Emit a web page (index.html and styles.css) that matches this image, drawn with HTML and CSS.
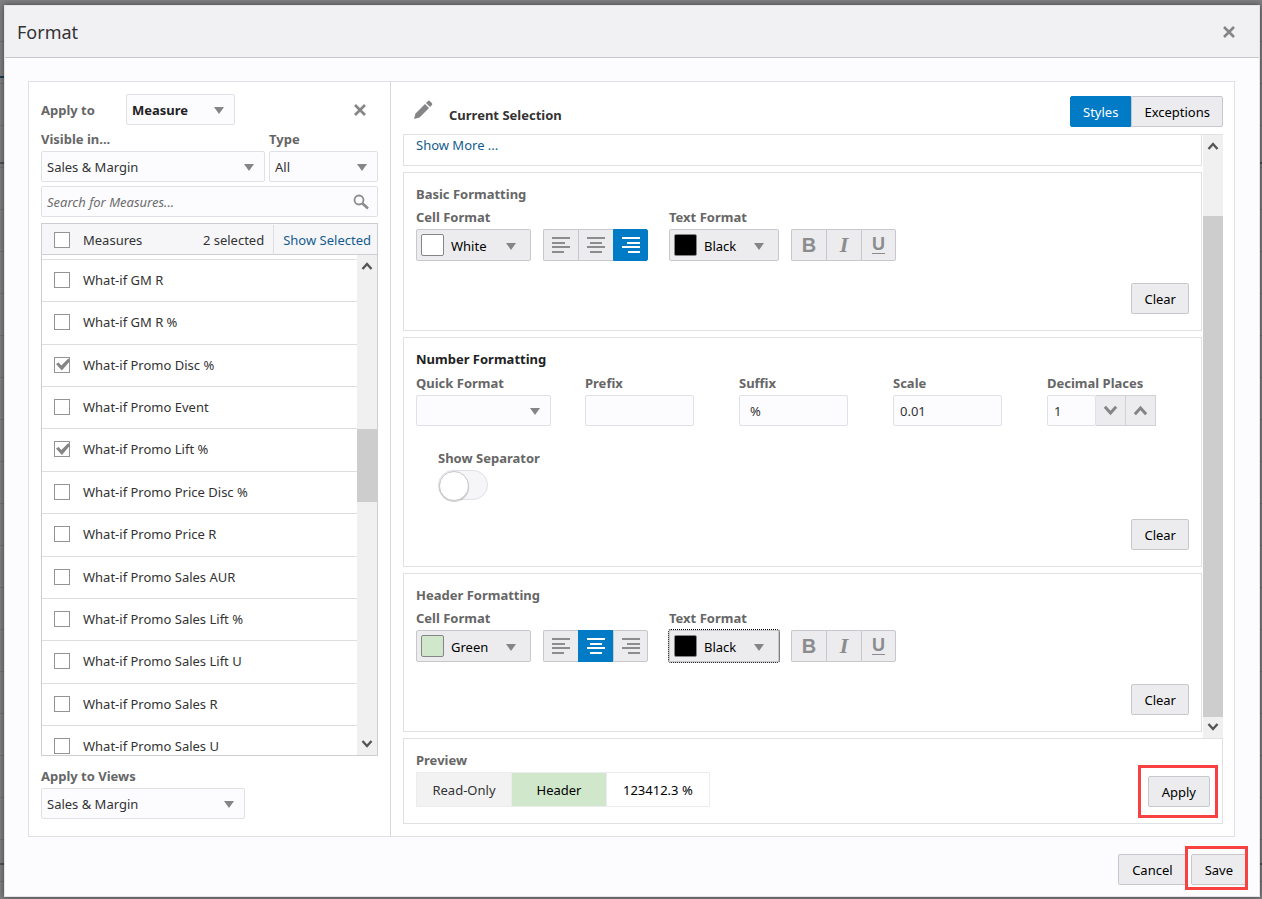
FILE: index.html
```html
<!DOCTYPE html>
<html lang="en">

<head>
  <meta charset="UTF-8" />
  <meta name="viewport" content="width=device-width, initial-scale=1.0" />
  <title>Format</title>
  <link rel="stylesheet" href="styles.css">
</head>

<body>
  <!-- icons -->
  <svg class="defs" aria-hidden="true">
    <symbol id="align-left" viewBox="0 0 18 16">
      <path d="M0 0h18v2H0zM0 5h13v2H0zM0 9h18v2H0zM0 14h12v2H0z" />
    </symbol>
    <symbol id="align-center" viewBox="0 0 18 16">
      <path d="M0 0h18v2H0zM3 5h12v2H3zM0 9h18v2H0zM3 14h12v2H3z" />
    </symbol>
    <symbol id="align-right" viewBox="0 0 18 16">
      <path d="M0 0h18v2H0zM5 5h13v2H5zM0 9h18v2H0zM6 14h12v2H6z" />
    </symbol>
    <symbol id="close" viewBox="0 0 12 12">
      <path d="M1 1l10 10M11 1L1 11" fill="none" stroke="currentColor" stroke-width="2.6" />
    </symbol>
    <symbol id="up" viewBox="0 0 12 10">
      <path d="M1.5 8L6 3l4.5 5" fill="none" stroke="currentColor" stroke-width="2.4" />
    </symbol>
    <symbol id="down" viewBox="0 0 12 10">
      <path d="M1.5 2L6 7l4.5-5" fill="none" stroke="currentColor" stroke-width="2.4" />
    </symbol>
  </svg>

  <!-- page behind the dialog -->
  <div class="backdrop" aria-hidden="true">
    <span class="blue-line"></span>
    <span class="dark-line"></span>
    <span class="dark-line bottom"></span>
  </div>

  <div class="dialog" role="dialog" aria-labelledby="dialogTitle">
    <header class="dialog-header">
      <h1 id="dialogTitle">Format</h1>
      <button class="icon-btn" type="button" aria-label="Close"><svg width="12" height="12"><use href="#close" /></svg></button>
    </header>

    <main class="content">
      <aside class="left">
        <div class="apply-row">
          <label for="applyTo">Apply to</label>
          <div class="select-box strong">
            <select id="applyTo">
              <option>Measure</option>
            </select>
          </div>
          <button class="icon-btn" type="button" aria-label="Close panel"><svg width="12" height="12"><use href="#close" /></svg></button>
        </div>

        <div class="filter-row">
          <div class="field visible-in">
            <label for="visibleIn">Visible in...</label>
            <div class="select-box">
              <select id="visibleIn">
                <option>Sales &amp; Margin</option>
              </select>
            </div>
          </div>
          <div class="field type">
            <label for="type">Type</label>
            <div class="select-box">
              <select id="type">
                <option>All</option>
              </select>
            </div>
          </div>
        </div>

        <div class="search">
          <input type="text" aria-label="Search for Measures" placeholder="Search for Measures..." />
          <svg width="16" height="16" viewBox="0 0 16 16" fill="none" stroke="#8c8c8e">
            <circle cx="6" cy="6" r="4.5" stroke-width="1.8" />
            <path d="M9.5 9.5l5.5 5" stroke-width="2.6" />
          </svg>
        </div>

        <div class="measures">
          <div class="measures-head">
            <label class="check"><input type="checkbox" /> Measures</label>
            <span class="count">2 selected</span>
            <a href="#">Show Selected</a>
          </div>
          <div class="measures-body">
            <ul>
              <li><label class="check"><input type="checkbox" /> What-if GM R</label></li>
              <li><label class="check"><input type="checkbox" /> What-if GM R %</label></li>
              <li><label class="check"><input type="checkbox" checked /> What-if Promo Disc %</label></li>
              <li><label class="check"><input type="checkbox" /> What-if Promo Event</label></li>
              <li><label class="check"><input type="checkbox" checked /> What-if Promo Lift %</label></li>
              <li><label class="check"><input type="checkbox" /> What-if Promo Price Disc %</label></li>
              <li><label class="check"><input type="checkbox" /> What-if Promo Price R</label></li>
              <li><label class="check"><input type="checkbox" /> What-if Promo Sales AUR</label></li>
              <li><label class="check"><input type="checkbox" /> What-if Promo Sales Lift %</label></li>
              <li><label class="check"><input type="checkbox" /> What-if Promo Sales Lift U</label></li>
              <li><label class="check"><input type="checkbox" /> What-if Promo Sales R</label></li>
              <li><label class="check"><input type="checkbox" /> What-if Promo Sales U</label></li>
            </ul>
            <div class="scrollbar list-bar">
              <svg width="12" height="10"><use href="#up" /></svg>
              <span class="track"><span class="thumb"></span></span>
              <svg width="12" height="10"><use href="#down" /></svg>
            </div>
          </div>
        </div>

        <div class="field views">
          <label for="applyViews">Apply to Views</label>
          <div class="select-box">
            <select id="applyViews">
              <option>Sales &amp; Margin</option>
            </select>
          </div>
        </div>
      </aside>

      <section class="right">
        <div class="right-header">
          <svg class="pencil" width="20" height="20" viewBox="0 0 20 20" fill="#858587">
            <path d="M1 19l1.5-5.5L12 4l4 4-9.500 9.500zM13 3l1.800-1.800a1.500 1.500 0 0 1 2.200 0l1.800 1.800a1.500 1.500 0 0 1 0 2.200L17 7z" />
          </svg>
          <h2>Current Selection</h2>
          <div class="tabs">
            <button type="button" class="tab active">Styles</button>
            <button type="button" class="tab">Exceptions</button>
          </div>
        </div>

        <div class="scroll-area">
          <div class="sections">
            <div class="card summary"><a href="#">Show More ...</a></div>

            <div class="card">
              <h3>Basic Formatting</h3>
              <div class="format-row">
                <div class="field">
                  <label for="basicCell">Cell Format</label>
                  <div class="color-select">
                    <span class="swatch white"></span>
                    <select id="basicCell">
                      <option>White</option>
                    </select>
                  </div>
                </div>
                <div class="btn-group">
                  <button type="button" aria-label="Align left"><svg width="18" height="16"><use href="#align-left" /></svg></button>
                  <button type="button" aria-label="Align center"><svg width="18" height="16"><use href="#align-center" /></svg></button>
                  <button type="button" class="active" aria-label="Align right"><svg width="18" height="16"><use href="#align-right" /></svg></button>
                </div>
                <div class="field text-format">
                  <label for="basicText">Text Format</label>
                  <div class="color-select">
                    <span class="swatch black"></span>
                    <select id="basicText">
                      <option>Black</option>
                    </select>
                  </div>
                </div>
                <div class="btn-group">
                  <button type="button" class="bold">B</button>
                  <button type="button" class="italic">I</button>
                  <button type="button" class="underline">U</button>
                </div>
              </div>
              <div class="card-actions"><button class="btn" type="button">Clear</button></div>
            </div>

            <div class="card">
              <h3 class="dark">Number Formatting</h3>
              <div class="number-row">
                <div class="field">
                  <label for="quickFormat">Quick Format</label>
                  <div class="select-box">
                    <select id="quickFormat">
                      <option></option>
                    </select>
                  </div>
                </div>
                <div class="field">
                  <label for="prefix">Prefix</label>
                  <input type="text" id="prefix" />
                </div>
                <div class="field">
                  <label for="suffix">Suffix</label>
                  <input type="text" id="suffix" class="suffix" value="%" />
                </div>
                <div class="field">
                  <label for="scale">Scale</label>
                  <input type="text" id="scale" value="0.01" />
                </div>
                <div class="field">
                  <label for="decimals">Decimal Places</label>
                  <div class="spinner">
                    <input type="text" id="decimals" value="1" />
                    <button type="button" aria-label="Decrease"><svg width="15" height="13"><use href="#down" /></svg></button>
                    <button type="button" aria-label="Increase"><svg width="15" height="13"><use href="#up" /></svg></button>
                  </div>
                </div>
              </div>
              <div class="separator">
                <label for="showSeparator">Show Separator</label>
                <input type="checkbox" class="switch" id="showSeparator" />
              </div>
              <div class="card-actions"><button class="btn" type="button">Clear</button></div>
            </div>

            <div class="card">
              <h3>Header Formatting</h3>
              <div class="format-row">
                <div class="field">
                  <label for="headerCell">Cell Format</label>
                  <div class="color-select">
                    <span class="swatch green"></span>
                    <select id="headerCell">
                      <option>Green</option>
                    </select>
                  </div>
                </div>
                <div class="btn-group">
                  <button type="button" aria-label="Align left"><svg width="18" height="16"><use href="#align-left" /></svg></button>
                  <button type="button" class="active" aria-label="Align center"><svg width="18" height="16"><use href="#align-center" /></svg></button>
                  <button type="button" aria-label="Align right"><svg width="18" height="16"><use href="#align-right" /></svg></button>
                </div>
                <div class="field text-format">
                  <label for="headerText">Text Format</label>
                  <div class="color-select focused">
                    <span class="swatch black"></span>
                    <select id="headerText">
                      <option>Black</option>
                    </select>
                  </div>
                </div>
                <div class="btn-group">
                  <button type="button" class="bold">B</button>
                  <button type="button" class="italic">I</button>
                  <button type="button" class="underline">U</button>
                </div>
              </div>
              <div class="card-actions"><button class="btn" type="button">Clear</button></div>
            </div>
          </div>

          <div class="scrollbar main-bar">
            <svg width="12" height="10"><use href="#up" /></svg>
            <span class="track"><span class="thumb"></span></span>
            <svg width="12" height="10"><use href="#down" /></svg>
          </div>
        </div>

        <div class="preview">
          <div>
            <h3>Preview</h3>
            <table>
              <tr>
                <td class="read-only">Read-Only</td>
                <td class="header-cell">Header</td>
                <td class="value">123412.3 %</td>
              </tr>
            </table>
          </div>
          <span class="callout"><button class="btn" type="button">Apply</button></span>
        </div>
      </section>
    </main>

    <footer class="dialog-footer">
      <button class="btn" type="button">Cancel</button>
      <span class="callout save"><button class="btn" type="button">Save</button></span>
    </footer>
  </div>
</body>

</html>
```

FILE: styles.css
```css
* {
  margin: 0;
  padding: 0;
  box-sizing: border-box;
}

body {
  position: relative;
  min-height: 100vh;
  display: flex;
  padding: 5px 2px 2px 4px;
  color: #333;
  font-family: 'Noto Sans', 'Open Sans', sans-serif;
  font-size: 13px;
}

button,
input,
select {
  font: inherit;
  color: inherit;
}

button {
  cursor: pointer;
}

a {
  color: #145c8e;
  text-decoration: none;
}

a:hover {
  text-decoration: underline;
}

.defs {
  position: absolute;
  width: 0;
  height: 0;
}

.backdrop {
  position: absolute;
  inset: 0;
  background: repeating-linear-gradient(#808082 0 41px, #727274 41px 42px);
}

.backdrop span {
  position: absolute;
  left: 0;
  right: 0;
  height: 2px;
}

.backdrop .blue-line {
  top: 76px;
  right: 50%;
  background: #1c3a52;
}

.dark-line {
  top: 162px;
  background: #505054;
}

.dark-line.bottom {
  top: 863px;
}

.dialog {
  position: relative;
  flex: 1;
  display: flex;
  flex-direction: column;
  background: #fcfcff;
  border: 1px solid #e4e4e8;
  box-shadow: 0 0 6px rgba(0, 0, 0, 0.5);
}

.dialog-header {
  display: flex;
  align-items: center;
  justify-content: space-between;
  height: 52px;
  padding: 0 24px 0 12px;
  background: #f1f1f4;
  border-bottom: 1px solid #c8c8cc;
}

.dialog-header h1 {
  font-size: 18px;
  font-weight: 400;
}

.icon-btn {
  display: flex;
  border: none;
  background: none;
  color: #858587;
}

.content {
  display: flex;
  margin: 23px 24px 0 23px;
  background: #fff;
  border: 1px solid #dfe1e4;
}

/* Shared fields */
label,
h3 {
  font-weight: 700;
  color: #666;
}

.field {
  display: flex;
  flex-direction: column;
}

.field label,
.separator label {
  line-height: 24px;
}

.select-box,
.color-select {
  position: relative;
}

.select-box::after,
.color-select::after {
  content: "";
  position: absolute;
  top: 13px;
  right: 11px;
  border: 5px solid transparent;
  border-top: 7px solid #858588;
  border-bottom: none;
  pointer-events: none;
}

select {
  appearance: none;
  display: block;
  width: 100%;
  cursor: pointer;
}

.select-box select,
.field input[type="text"],
.search input {
  width: 100%;
  height: 31px;
  padding: 1px 5px 0;
  background: #fcfcff;
  border: 1px solid #dfe1e6;
  border-radius: 2px;
}

.field input[type="text"] {
  width: 109px;
  padding: 1px 6px 0;
}

.field input.suffix {
  padding-left: 10px;
}

.btn {
  height: 31px;
  padding: 1px 12px 0;
  background: #ececee;
  border: 1px solid #c6c8cc;
  border-radius: 2px;
  color: #000;
}

.btn:hover {
  background: #fff;
}

/* Left panel */
.left {
  width: 361px;
  padding: 12px 12px 17px;
}

.apply-row {
  display: flex;
  align-items: center;
}

.apply-row .select-box {
  width: 109px;
  margin: 0 auto 0 31px;
}

.strong select {
  color: #222;
  font-weight: 700;
}

.apply-row .icon-btn {
  margin-right: 12px;
}

.filter-row {
  display: flex;
  gap: 4px;
  margin-top: 2px;
}

.visible-in {
  flex: 1;
}

.type {
  width: 109px;
}

.search {
  position: relative;
  margin: 4px 0 6px;
}

.search input::placeholder {
  color: #6c6c6e;
  font-style: italic;
}

.search svg {
  position: absolute;
  top: 8px;
  right: 9px;
}

.measures {
  border: 1px solid #ccced2;
}

.measures-head {
  display: flex;
  align-items: center;
  height: 31px;
  padding-top: 1px;
  background: #f6f6f9;
  border-bottom: 1px solid #ccced2;
}

.measures-head a {
  padding: 0 6px 0 9px;
  line-height: 30px;
  border-left: 1px solid #dcdee0;
}

.count {
  margin-left: auto;
  padding-right: 9px;
}

.check {
  display: flex;
  align-items: center;
  gap: 13px;
  padding-left: 12px;
  font-weight: 400;
  color: #333;
}

.check input {
  appearance: none;
  position: relative;
  width: 16px;
  height: 16px;
  background: #fff;
  border: 1px solid #949496;
}

.check input:checked::after {
  content: "";
  position: absolute;
  inset: 0 -1px 1px 1px;
  background: #858587;
  clip-path: polygon(0 50%, 18% 38%, 38% 62%, 88% 8%, 100% 26%, 42% 100%);
}

.measures-body {
  display: flex;
  height: 500px;
  overflow: hidden;
}

.measures-body ul {
  flex: 1;
  display: grid;
  grid-auto-rows: 42px 43px 42px 42px 43px;
  margin-top: 4px;
  list-style: none;
}

.measures-body li {
  display: flex;
  padding-bottom: 2px;
  border-top: 1px solid #dcdee0;
}

/* Scrollbars */
.scrollbar {
  display: flex;
  flex-direction: column;
  align-items: center;
  width: 20px;
  padding: 6px 0;
  background: #f0f0f0;
  color: #555;
}

.track {
  flex: 1;
  width: 100%;
}

.thumb {
  display: block;
  background: #cdcdcd;
}

.list-bar .thumb {
  height: 73px;
  margin-top: 158px;
}

.views {
  width: 204px;
  margin-top: 8px;
}

/* Right panel */
.right {
  flex: 1;
  padding: 0 11px 12px 12px;
  border-left: 1px solid #d6d8dc;
}

.right-header {
  display: flex;
  align-items: center;
  height: 52px;
  padding-top: 7px;
}

.pencil {
  margin: 0 16px 4px 10px;
}

.right-header h2 {
  padding-top: 6px;
  font-size: 13px;
  font-weight: 700;
}

.tabs {
  display: flex;
  margin-left: auto;
}

.tab {
  height: 31px;
  padding: 0 12px;
  background: #ececee;
  border: 1px solid #c6c8cc;
  border-radius: 0 2px 2px 0;
  color: #000;
}

.tab.active {
  background: #027bc7;
  border-color: #027bc7;
  border-radius: 2px 0 0 2px;
  color: #fff;
}

.scroll-area {
  display: flex;
  border-top: 1px solid #dfe1e4;
}

.sections {
  flex: 1;
  display: flex;
  flex-direction: column;
  gap: 6px;
  padding-bottom: 6px;
}

.card {
  padding: 10px 12px 16px;
  border: 1px solid #dfe1e4;
}

.summary {
  padding: 0 12px 9px;
  line-height: 21px;
  border-top: none;
}

h3 {
  font-size: 13px;
  line-height: 22px;
}

h3.dark {
  color: #222;
}

.format-row {
  display: flex;
  flex-wrap: wrap;
  align-items: flex-end;
  gap: 12px;
}

.text-format {
  margin-left: 9px;
}

.color-select {
  display: flex;
  align-items: center;
  width: 115px;
  height: 32px;
  background: #ececee;
  border: 1px solid #c6c8cc;
  border-radius: 2px;
}

.text-format .color-select {
  width: 110px;
}

.color-select::after {
  right: 14px;
}

.color-select select {
  height: 30px;
  padding: 1px 0 0 34px;
  background: none;
  border: none;
  color: #000;
}

.focused {
  outline: 1px dotted #000;
}

.swatch {
  position: absolute;
  left: 4px;
  width: 23px;
  height: 22px;
  border: 1px solid #858587;
  border-radius: 2px;
  pointer-events: none;
}

.white {
  background: #fff;
}

.black {
  background: #000;
}

.green {
  background: #d0e7cb;
}

.btn-group {
  display: flex;
}

.btn-group button {
  display: flex;
  align-items: center;
  justify-content: center;
  width: 35px;
  height: 32px;
  background: #ececee;
  border: 1px solid #c6c8cc;
  border-right-width: 0;
  color: #8c8c8e;
  fill: currentColor;
}

.btn-group button:first-child {
  border-radius: 2px 0 0 2px;
}

.btn-group button:last-child {
  border-right-width: 1px;
  border-radius: 0 2px 2px 0;
}

.btn-group button.active {
  background: #027bc7;
  border-color: #027bc7;
  color: #fff;
}

.btn-group .bold,
.btn-group .underline {
  font-family: 'Liberation Sans', sans-serif;
  font-size: 20px;
  font-weight: 700;
}

.btn-group .italic {
  font-family: 'Liberation Serif', serif;
  font-size: 22px;
  font-style: italic;
  font-weight: 700;
}

.btn-group .underline {
  padding-bottom: 1px;
  font-size: 18px;
  text-decoration: underline 1px;
  text-underline-offset: 3px;
}

.card-actions {
  display: flex;
  justify-content: flex-end;
  margin-top: 22px;
}

.number-row {
  display: grid;
  grid-template-columns: 135px repeat(4, 120px);
  column-gap: 34px;
  margin-top: 1px;
}

.spinner {
  display: flex;
  width: 109px;
}

.field .spinner input[type="text"] {
  width: 49px;
}

.spinner button {
  display: flex;
  align-items: center;
  justify-content: center;
  flex: 0 0 30px;
  background: #ececee;
  border: 1px solid #d0d2d6;
  border-left-width: 0;
  color: #858587;
}

.separator {
  display: flex;
  flex-direction: column;
  margin: 20px 22px 0;
}

.separator + .card-actions {
  margin-top: 19px;
}

.switch {
  appearance: none;
  width: 50px;
  height: 30px;
  background: #f6f6f9;
  border: 1px solid #dfe1e4;
  border-radius: 15px;
}

.switch::before {
  content: "";
  display: block;
  width: 28px;
  height: 28px;
  background: #fff;
  border: 1px solid #c6c8cc;
  border-radius: 50%;
  box-shadow: 0 1px 1px rgba(0, 0, 0, 0.2);
}

.main-bar {
  margin-left: 1px;
}

.main-bar .thumb {
  height: 501px;
  margin-top: 65px;
}

.preview {
  display: flex;
  align-items: flex-end;
  justify-content: space-between;
  padding: 9px 12px 16px;
  border: 1px solid #dfe1e4;
}

.preview h3 {
  line-height: 24px;
}

.preview table {
  border-collapse: collapse;
}

.preview td {
  min-width: 95px;
  height: 34px;
  border: 1px solid #ececee;
  text-align: center;
}

.preview .read-only {
  background: #f2f2f2;
}

.preview .header-cell {
  background: #d0e7cb;
  color: #000;
}

.preview .value {
  padding: 0 16px;
  color: #000;
}

/* Red frames around Apply and Save */
.callout {
  position: relative;
}

.callout .btn,
.dialog-footer .btn {
  padding: 1px 13px 0;
}

.callout::after {
  content: "";
  position: absolute;
  inset: -11px -8px -11px -10px;
  border: 3px solid #f84141;
  pointer-events: none;
}

.callout.save::after {
  inset: -8px -1px -5px -6px;
}

.dialog-footer {
  display: flex;
  justify-content: flex-end;
  gap: 4px;
  padding: 17px 12px 11px;
}
```
